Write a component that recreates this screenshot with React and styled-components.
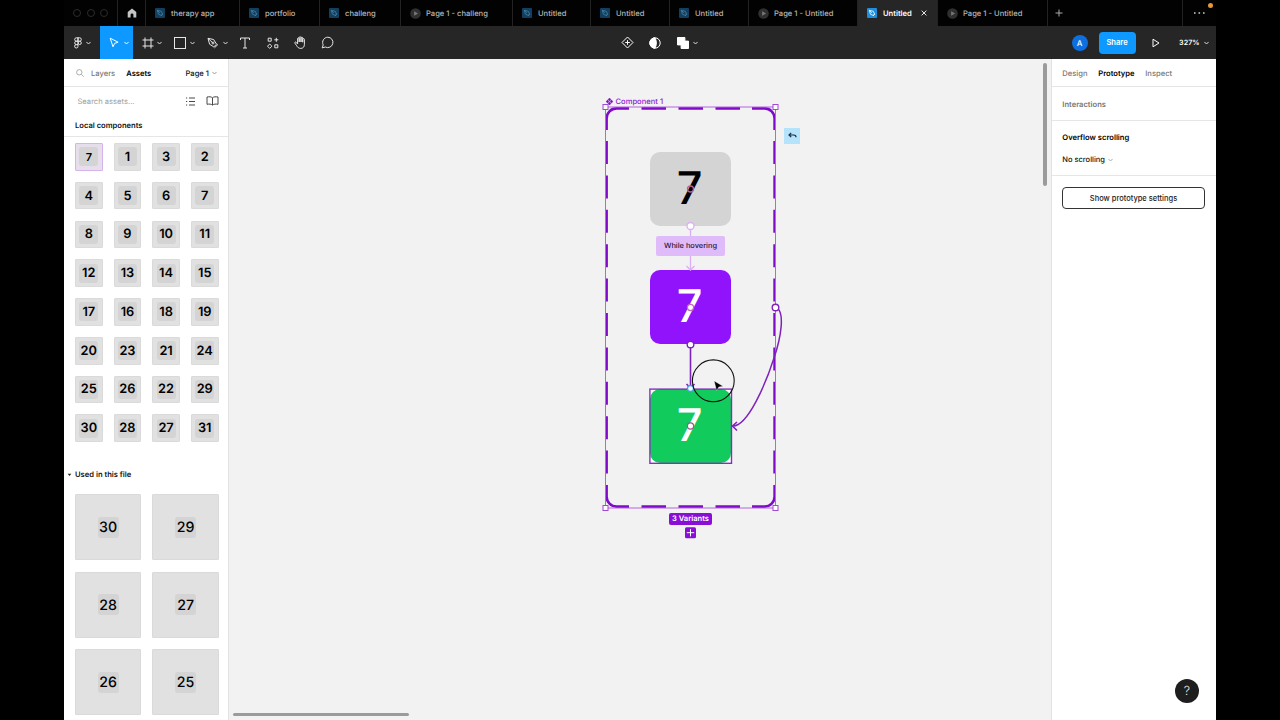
import React from "react";
import styled, { createGlobalStyle, css } from "styled-components";

const GlobalStyle = createGlobalStyle`
  * {
    box-sizing: border-box;
  }

  body {
    margin: 0;
    background: #000;
    font-family: Inter, "Liberation Sans", sans-serif;
    font-size: 7.6px;
    color: #111;
    overflow: hidden;
    text-rendering: geometricPrecision;
  }
`;

const AppWindow = styled.div`
  display: flex;
  flex-direction: column;
  width: 1152px;
  height: 720px;
  margin: 0 64px;
  background: #fff;
`;

// Tab bar
const TabBar = styled.div`
  display: flex;
  flex: none;
  height: 26px;
  background: #020202;
`;

const Tab = styled.div`
  display: flex;
  flex: none;
  align-items: center;
  width: ${(props) => props.$width}px;
  padding-left: 9px;
  border-right: 1px solid #222;
  color: ${(props) => (props.$active ? "#fff" : "#b8b8b8")};
  background: ${(props) => (props.$active ? "#262626" : "transparent")};
  font-weight: ${(props) => (props.$active ? 600 : 500)};
  font-size: 7.6px;
  white-space: nowrap;

  svg {
    flex: none;
    margin-right: ${(props) => (props.$play ? 5 : 6)}px;
  }
`;

const TabClose = styled.span`
  display: flex;
  margin-left: 9px;

  svg {
    margin: 0;
  }
`;

const WindowControls = styled.div`
  display: flex;
  flex: none;
  align-items: center;
  gap: 5.7px;
  width: 54px;
  padding-left: 9px;
  border-right: 1px solid #222;
`;

const WindowDot = styled.span`
  width: 8px;
  height: 8px;
  border: 1px solid #2e2a29;
  border-radius: 50%;
`;

const HomeTab = styled.div`
  display: flex;
  flex: none;
  align-items: center;
  justify-content: center;
  width: 28px;
  border-right: 1px solid #222;
`;

const AddTab = styled.div`
  display: flex;
  flex: 1;
  align-items: center;
  padding-left: 7px;
`;

const TabMenu = styled.div`
  position: relative;
  display: flex;
  align-items: center;
  justify-content: center;
  width: 34px;
  border-left: 1px solid #222;
`;

const NotificationDot = styled.span`
  position: absolute;
  top: 3px;
  right: 3px;
  width: 5px;
  height: 5px;
  border-radius: 50%;
  background: #e8973a;
`;

// Toolbar
const Toolbar = styled.div`
  display: grid;
  grid-template-columns: 550px auto 1fr;
  flex: none;
  height: 33px;
  background: #262626;
`;

const ToolGroup = styled.div`
  display: flex;
  align-items: center;
  justify-content: ${(props) => props.$align || "flex-start"};
`;

const Tool = styled.div`
  display: flex;
  align-items: center;
  justify-content: center;
  gap: ${(props) => props.$gap || 4}px;
  width: ${(props) => props.$width}px;
  height: 33px;
  padding-left: ${(props) => props.$indent || 0}px;
  background: ${(props) => (props.$active ? "#0d99ff" : "transparent")};
`;

const Avatar = styled.div`
  display: flex;
  align-items: center;
  justify-content: center;
  width: 16px;
  height: 16px;
  margin-right: 11px;
  border-radius: 50%;
  background: #0d6fe0;
  color: #fff;
  font-size: 8px;
  font-weight: 500;
`;

const ShareButton = styled.button`
  width: 37px;
  height: 22px;
  margin-right: 16.5px;
  padding: 0;
  border: none;
  border-radius: 4px;
  background: #0d99ff;
  color: #fff;
  font-family: inherit;
  font-size: 7.6px;
  font-weight: 600;
`;

const ZoomLevel = styled.div`
  display: flex;
  align-items: center;
  gap: 4px;
  margin: 0 7.5px 0 19px;
  color: #fff;
  font-size: 7.2px;
  font-weight: 600;
`;

// Main area
const Main = styled.div`
  display: flex;
  flex: 1;
  min-height: 0;
`;

const LeftPanel = styled.div`
  flex: none;
  width: 165px;
  overflow: hidden;
  border-right: 1px solid #e2e2e2;
  background: #fff;
`;

const LeftHeader = styled.div`
  display: flex;
  align-items: center;
  height: 28px;
  padding: 1px 11px 0 12px;
  border-bottom: 1px solid #e6e6e6;
`;

const PanelTab = styled.span`
  color: ${(props) => (props.$active ? "#000" : "#777")};
  font-size: 7.6px;
  font-weight: ${(props) => (props.$active ? 600 : 500)};
`;

const LayersTab = styled(PanelTab)`
  margin: 0 11px 0 7px;
`;

const PageSelect = styled.div`
  display: flex;
  align-items: center;
  gap: 3px;
  margin-left: auto;
  font-weight: 500;
`;

const SearchRow = styled.div`
  display: flex;
  align-items: center;
  gap: 10.7px;
  height: 28px;
  padding: 0 9.3px 0 13.5px;
  color: #a0a0a0;
`;

const SearchText = styled.span`
  flex: 1;
`;

const SectionTitle = styled.div`
  height: 21.5px;
  padding: 6px 0 0 11px;
  border-bottom: 1px solid #e6e6e6;
  color: #111;
  font-weight: 600;
  line-height: 10px;
`;

const ComponentGrid = styled.div`
  display: grid;
  grid-template-columns: repeat(4, 27.6px);
  grid-auto-rows: 27.6px;
  gap: 11.2px 11.05px;
  padding: 6.5px 0 0 11px;
`;

const Tile = styled.div`
  display: flex;
  align-items: center;
  justify-content: center;
  border: 1px solid ${(props) => (props.$selected ? "#d5b4ee" : "#dadada")};
  border-radius: 1px;
  background: ${(props) => (props.$selected ? "#e6dfeb" : "#e1e1e1")};
`;

const TileNumber = styled.span`
  display: flex;
  align-items: center;
  justify-content: center;
  width: ${(props) => (props.$large ? 21 : 19)}px;
  height: ${(props) => (props.$large ? 21 : 19)}px;
  padding-top: 1px;
  border-radius: 3px;
  background: #d4d4d4;
  color: #000;
  font-size: ${(props) => (props.$large ? 14.2 : props.$small ? 11 : 12.8)}px;
  font-weight: ${(props) => (props.$large ? 500 : 600)};
`;

const UsedHeader = styled.div`
  display: flex;
  align-items: center;
  gap: 3px;
  height: 20px;
  margin-top: 22px;
  padding: 1px 0 0 3px;
  font-weight: 600;
`;

const UsedGrid = styled.div`
  display: grid;
  grid-template-columns: repeat(2, 66.3px);
  grid-auto-rows: 66.3px;
  gap: 11.2px;
  padding: 10px 0 0 11px;
`;

// Canvas: the nodes sit freely on it, so they are placed by coordinates
const Canvas = styled.div`
  position: relative;
  flex: 1;
  overflow: hidden;
  background: #f2f2f2;
`;

const CanvasDrawing = styled.svg`
  position: absolute;
  top: 0;
  left: 0;
`;

const VariantNode = styled.div`
  position: absolute;
  top: ${(props) => props.$top}px;
  left: 421.2px;
  display: flex;
  align-items: center;
  justify-content: center;
  width: 80.8px;
  height: 74px;
  padding: 0 2px 3.5px 0;
  border-radius: 10px;
  background: ${(props) => props.$bg};
  color: ${(props) => props.$color};
  font-size: 45px;
  font-weight: 500;
  line-height: 1;
`;

const SelectionBackdrop = styled.div`
  position: absolute;
  top: 330px;
  left: 421px;
  width: 81px;
  height: 74px;
  background: #fff;
`;

const ComponentLabel = styled.div`
  position: absolute;
  top: 37px;
  left: 377px;
  display: flex;
  align-items: center;
  gap: 2.5px;
  color: #8f1bd4;
  font-weight: 500;
  line-height: 11px;
`;

const HoverLabel = styled.div`
  position: absolute;
  top: 177px;
  left: 427px;
  width: 69px;
  height: 20px;
  border-radius: 2px;
  background: #dfbcf9;
  color: #2a1238;
  font-size: 7.4px;
  font-weight: 500;
  line-height: 20px;
  text-align: center;
`;

const VariantCount = styled.div`
  position: absolute;
  top: 454px;
  left: 440px;
  width: 43px;
  height: 12px;
  border-radius: 2px;
  background: #8a0fd6;
  color: #fff;
  font-weight: 600;
  line-height: 12px;
  text-align: center;
`;

const BackBadge = styled.div`
  position: absolute;
  top: 68.5px;
  left: 555px;
  display: flex;
  align-items: center;
  justify-content: center;
  width: 16px;
  height: 16px;
  background: #b4e3fb;
`;

const Scrollbar = styled.div`
  position: absolute;
  border-radius: 3px;
  background: #9b9b9b;
  ${(props) =>
    props.$vertical
      ? css`
          top: 4px;
          right: 4px;
          width: 4px;
          height: 123px;
        `
      : css`
          bottom: 4px;
          left: 4px;
          width: 176px;
          height: 3px;
        `}
`;

// Right panel
const RightPanel = styled.div`
  position: relative;
  flex: none;
  width: 165px;
  border-left: 1px solid #e2e2e2;
  background: #fff;
`;

const RightTabs = styled.div`
  display: flex;
  align-items: center;
  gap: 10.8px;
  height: 28px;
  padding: 1px 0 0 10.3px;
  border-bottom: 1px solid #e6e6e6;
`;

const InteractionsRow = styled.div`
  display: flex;
  align-items: center;
  height: 34px;
  padding: 1px 0 0 10.3px;
  border-bottom: 1px solid #e6e6e6;
  color: #777;
  font-weight: 600;
`;

const OverflowSection = styled.div`
  height: 55px;
  padding: 12px 0 0 10.3px;
  border-bottom: 1px solid #e6e6e6;
`;

const OverflowTitle = styled.div`
  margin-bottom: 12px;
  color: #000;
  font-weight: 600;
  line-height: 10px;
`;

const OverflowSelect = styled.div`
  display: flex;
  align-items: center;
  gap: 3px;
  font-size: 7.5px;
  font-weight: 500;
  line-height: 10px;
`;

const SettingsButton = styled.button`
  display: block;
  width: 143px;
  height: 22px;
  margin: 11px 0 0 10px;
  padding: 0;
  border: 1px solid #333;
  border-radius: 4px;
  background: #fff;
  color: #222;
  font-family: inherit;
  font-size: 7.5px;
  font-weight: 500;
`;

const HelpButton = styled.div`
  position: absolute;
  right: 17px;
  bottom: 17px;
  display: flex;
  align-items: center;
  justify-content: center;
  width: 24px;
  height: 24px;
  border-radius: 50%;
  background: #1e1e1e;
  color: #e4e4e4;
  font-size: 12.5px;
  font-weight: 300;
`;

const TABS = [
  { label: "therapy app", width: 94 },
  { label: "portfolio", width: 80 },
  { label: "challeng", width: 81 },
  { label: "Page 1 - challeng", width: 112, play: true },
  { label: "Untitled", width: 78 },
  { label: "Untitled", width: 79 },
  { label: "Untitled", width: 79 },
  { label: "Page 1 - Untitled", width: 109, play: true },
  { label: "Untitled", width: 80, active: true },
  { label: "Page 1 - Untitled", width: 110, play: true },
];

const LOCAL_COMPONENTS = [
  7, 1, 3, 2, 4, 5, 6, 7, 8, 9, 10, 11, 12, 13, 14, 15, 17, 16, 18, 19, 20, 23,
  21, 24, 25, 26, 22, 29, 30, 28, 27, 31,
];

const USED_COMPONENTS = [30, 29, 28, 27, 26, 25];

function Icon({ width = 12, height = 12, color = "#e6e6e6", stroke = 1, children }) {
  return (
    <svg
      width={width}
      height={height}
      viewBox={`0 0 ${width} ${height}`}
      fill="none"
      stroke={color}
      strokeWidth={stroke}
    >
      {children}
    </svg>
  );
}

function Chevron({ color = "#dedede" }) {
  return (
    <Icon width={5} height={4} color={color}>
      <path d="M.4 .9l2.1 2.1L4.6 .9" />
    </Icon>
  );
}

function FileIcon({ active }) {
  return (
    <Icon width={10} height={10} color={active ? "#fff" : "#4580a2"} stroke={0.8}>
      <rect width="10" height="10" rx="1" fill={active ? "#1e8fdd" : "#123f5f"} stroke="none" />
      <path d="M2.3 2.3l4 1 1.2 2.7-1.4 1.4-2.7-1.2zM2.3 2.3l2.5 2.5M6 8l2-2" />
    </Icon>
  );
}

function PlayIcon() {
  return (
    <Icon width={11} height={11}>
      <circle cx="5.5" cy="5.5" r="5.3" fill="#303030" stroke="none" />
      <path d="M4.1 3.2l4 2.3-4 2.3z" fill="#777" stroke="none" />
    </Icon>
  );
}

function Tabs() {
  return (
    <TabBar>
      <WindowControls>
        <WindowDot />
        <WindowDot />
        <WindowDot />
      </WindowControls>
      <HomeTab>
        <Icon width={10} height={10}>
          <path d="M5 .4L.7 4v5.4h2.9V6.8a1.4 1.4 0 012.8 0v2.6h2.9V4z" fill="#c4c4c4" stroke="none" />
        </Icon>
      </HomeTab>
      {TABS.map((tab, i) => (
        <Tab key={i} $width={tab.width} $active={tab.active} $play={tab.play}>
          {tab.play ? <PlayIcon /> : <FileIcon active={tab.active} />}
          {tab.label}
          {tab.active && (
            <TabClose>
              <Icon width={6} height={6}>
                <path d="M.6.6l4.8 4.8M5.4.6L.6 5.4" />
              </Icon>
            </TabClose>
          )}
        </Tab>
      ))}
      <AddTab>
        <Icon width={8} height={8} color="#aaa">
          <path d="M4 .5v7M.5 4h7" />
        </Icon>
      </AddTab>
      <TabMenu>
        <Icon width={11} height={2}>
          <path d="M0 1h1.6M4.5 1h1.6M9 1h1.6" stroke="#ccc" strokeWidth="1.4" />
        </Icon>
        <NotificationDot />
      </TabMenu>
    </TabBar>
  );
}

function ToolbarRow() {
  return (
    <Toolbar>
      <ToolGroup>
        <Tool $width={36} $gap={4}>
          <Icon width={8} height={12}>
            <path d="M4 .8H2.4a1.7 1.7 0 000 3.4H4zM4 .8h1.6a1.7 1.7 0 010 3.4H4zM4 4.2H2.4a1.7 1.7 0 000 3.4H4zM4 7.6H2.4A1.7 1.7 0 104 9.3z" />
            <circle cx="5.7" cy="5.9" r="1.6" />
          </Icon>
          <Chevron />
        </Tool>
        <Tool $width={33} $active $gap={5} $indent={4}>
          <Icon width={10} height={11} color="#fff">
            <path d="M1.2 1.2l7.9 4-3.5 1.2-1.6 3.4z" />
          </Icon>
          <Chevron color="#fff" />
        </Tool>
        <Tool $width={33} $gap={2.5} $indent={4.5}>
          <Icon>
            <path d="M3 .5v11M9 .5v11M.5 3h11M.5 9h11" />
          </Icon>
          <Chevron />
        </Tool>
        <Tool $width={33} $gap={4} $indent={4.5}>
          <Icon>
            <rect x=".5" y=".5" width="11" height="11" />
          </Icon>
          <Chevron />
        </Tool>
        <Tool $width={32} $gap={3.5} $indent={5}>
          <Icon>
            <path d="M1 1.3l5.6 1.2 3 4.7-2.8 2.7-4.2-2.7zM1 1.3l4.5 4.3M7.5 10.8l3.5-3.4" />
            <circle cx="6" cy="6" r="1" />
          </Icon>
          <Chevron />
        </Tool>
        <Tool $width={27}>
          <Icon>
            <path d="M1.5 3V1h9v2M6 1v10M4 11h4" />
          </Icon>
        </Tool>
        <Tool $width={29}>
          <Icon>
            <path d="M1.2 1.2h3v3h-3zM7.8 7.8h3v3h-3zM2.7 7l2.2 2.2-2.2 2.2L.5 9.2zM9.3.8v4M7.3 2.8h4" />
          </Icon>
        </Tool>
        <Tool $width={27}>
          <Icon width={13} height={13}>
            <path d="M3.6 8V2.7c0-1.2 1.6-1.2 1.6 0V6 1.6c0-1.2 1.8-1.2 1.8 0V6 2c0-1.1 1.7-1.1 1.7 0v4.2V3.4c0-1.1 1.7-1.1 1.7 0v5c0 2.5-1.4 4-3.6 4-2.3 0-3.3-1.2-4.1-2.7L.9 7.2c-.5-1 .7-1.7 1.5-.7z" />
          </Icon>
        </Tool>
        <Tool $width={26}>
          <Icon width={13} height={13}>
            <path d="M6.8 1.2a5.2 5.2 0 11-2.5 9.8L1.2 11.9l1-3A5.3 5.3 0 016.8 1.2z" />
          </Icon>
        </Tool>
      </ToolGroup>
      <ToolGroup>
        <Tool $width={27}>
          <Icon width={13} height={13} color="#fff">
            <path d="M6.5 1l5.5 5.5L6.5 12 1 6.5zM6.5 4.2v4.6M4.2 6.5h4.6" />
          </Icon>
        </Tool>
        <Tool $width={27}>
          <Icon color="#fff">
            <circle cx="6" cy="6" r="5.2" />
            <path d="M6 .8a5.2 5.2 0 000 10.4c1.8-2.8 1.8-7.6 0-10.4z" fill="#fff" />
          </Icon>
        </Tool>
        <Tool $width={38}>
          <Icon color="#fff">
            <path d="M.5.5h7.4v3.6h3.6v7.4H4.1V7.9H.5z" fill="#fff" />
          </Icon>
          <Chevron />
        </Tool>
      </ToolGroup>
      <ToolGroup $align="flex-end">
        <Avatar>A</Avatar>
        <ShareButton>Share</ShareButton>
        <Icon width={8} height={10} color="#fff">
          <path d="M1 1.2l6 3.8-6 3.8z" />
        </Icon>
        <ZoomLevel>
          327%
          <Chevron />
        </ZoomLevel>
      </ToolGroup>
    </Toolbar>
  );
}

function AssetsPanel() {
  return (
    <LeftPanel>
      <LeftHeader>
        <Icon width={8} height={8} color="#999" stroke={0.8}>
          <circle cx="3.3" cy="3.3" r="2.7" />
          <path d="M5.3 5.3l2.4 2.4" />
        </Icon>
        <LayersTab>Layers</LayersTab>
        <PanelTab $active>Assets</PanelTab>
        <PageSelect>
          Page 1
          <Chevron color="#999" />
        </PageSelect>
      </LeftHeader>
      <SearchRow>
        <SearchText>Search assets...</SearchText>
        <Icon width={9} height={9} color="#333" stroke={0.9}>
          <path d="M0 1h1.2M3 1h6M0 4.5h1.2M3 4.5h6M0 8h1.2M3 8h6" />
        </Icon>
        <Icon width={13} height={10} color="#333" stroke={0.9}>
          <path d="M6.5 1.8C5.5.7 3 .6 1 1v7.3c2-.4 4.5-.3 5.5.8 1-1.1 3.5-1.2 5.5-.8V1c-2-.4-4.5-.3-5.5.8zV9" />
        </Icon>
      </SearchRow>
      <SectionTitle>Local components</SectionTitle>
      <ComponentGrid>
        {LOCAL_COMPONENTS.map((number, i) => (
          <Tile key={i} $selected={i === 0}>
            <TileNumber $small={i === 0}>{number}</TileNumber>
          </Tile>
        ))}
      </ComponentGrid>
      <UsedHeader>
        <Icon width={5} height={4}>
          <path d="M.7.8h3.6L2.5 3.1z" fill="#222" stroke="none" />
        </Icon>
        Used in this file
      </UsedHeader>
      <UsedGrid>
        {USED_COMPONENTS.map((number) => (
          <Tile key={number}>
            <TileNumber $large>{number}</TileNumber>
          </Tile>
        ))}
      </UsedGrid>
    </LeftPanel>
  );
}

// Dashed outline of the component set with its selection handles
function ComponentSetOutline() {
  return (
    <g fill="none">
      <g stroke="#7f0bc8" strokeWidth="2.6">
        <path d="M400 49.4H387.6a10 10 0 00-10 10V71M523 49.4h12.6a10 10 0 0110 10V71M400 447.6H387.6a10 10 0 01-10-10V426M523 447.6h12.6a10 10 0 0010-10V426" />
        <path d="M412.5 49.4H511M412.5 447.6H511" strokeDasharray="24.5 12.5" />
        <path d="M377.6 82V416M545.6 82V416" strokeDasharray="23 11.4" />
      </g>
      <rect x="376.5" y="48" width="170" height="401" stroke="#b565dd" />
      {[
        [376.5, 48],
        [546.5, 48],
        [376.5, 449],
        [546.5, 449],
      ].map(([x, y]) => (
        <rect key={`${x}-${y}`} x={x - 2.5} y={y - 2.5} width="5" height="5" fill="#fff" stroke="#a347d6" />
      ))}
    </g>
  );
}

function Connectors() {
  return (
    <g fill="none">
      <g stroke="#d9b0f5" strokeWidth="1.3">
        <path d="M461.5 167V211M457.5 207l4 4 4-4" />
        <circle cx="461.5" cy="167" r="3.5" fill="#fff" />
      </g>
      <g stroke="#7f22bd" strokeWidth="1.6">
        <path d="M461.5 286V329M457.5 325l4 4 4-4" />
        <path d="M548 249C555.5 254 552.5 277 545 299C537 324 519 367 504 367" strokeWidth="1.5" />
        <path d="M508 363l-4.5 4 4.5 4.5" />
        <circle cx="461.5" cy="285.5" r="3.3" fill="#fff" strokeWidth="1.4" />
        <circle cx="546.5" cy="248.5" r="3.3" fill="#fff" strokeWidth="1.4" />
      </g>
      <circle cx="461.5" cy="329.5" r="3" fill="#fff" stroke="#3aa5f0" strokeWidth="1.3" />
      <circle cx="461.5" cy="130" r="3" stroke="#bf5ba0" strokeWidth="1.3" />
      <circle cx="461.5" cy="248.5" r="3.1" fill="#fff" stroke="#c765b8" strokeWidth="1.2" />
      <circle cx="461.5" cy="367" r="3.1" fill="#fff" stroke="#9a5a8a" strokeWidth="1.2" />
    </g>
  );
}

function DesignCanvas() {
  return (
    <Canvas>
      <SelectionBackdrop />
      <VariantNode $top={93} $bg="#d4d4d4" $color="#000">7</VariantNode>
      <VariantNode $top={211.4} $bg="#9013fb" $color="#fff">7</VariantNode>
      <VariantNode $top={330.3} $bg="#11cb5c" $color="#fff">7</VariantNode>
      <CanvasDrawing width="822" height="661">
        <ComponentSetOutline />
        <rect x="420.9" y="330.1" width="81.6" height="74.2" fill="none" stroke="#8530bd" strokeWidth="1.4" />
        <Connectors />
        <rect x="456" y="468.2" width="11" height="11" rx="1.5" fill="#8a0fd6" />
        <path d="M461.5 470v7.4M457.8 473.7h7.4" stroke="#fff" />
        <circle cx="484.3" cy="321.8" r="20.9" fill="none" stroke="#111" strokeWidth="1.1" />
        <path d="M485.2 322l8.8 5.2-4.2.8-2.2 3.7z" fill="#000" stroke="#eee" strokeWidth=".4" />
      </CanvasDrawing>
      <ComponentLabel>
        <Icon width={7} height={7}>
          <path
            d="M3.5 0l1.5 1.5L3.5 3 2 1.5zM3.5 4L5 5.5 3.5 7 2 5.5zM1.5 2L3 3.5 1.5 5 0 3.5zM5.5 2L7 3.5 5.5 5 4 3.5z"
            fill="#7f0bc8"
            stroke="#7f0bc8"
            strokeWidth=".4"
          />
        </Icon>
        Component 1
      </ComponentLabel>
      <HoverLabel>While hovering</HoverLabel>
      <VariantCount>3 Variants</VariantCount>
      <BackBadge>
        <Icon width={9} height={7} color="#17303e" stroke={1.2}>
          <path d="M3.2 .8L1 3l2.2 2.2M1 3h4.8C7.2 3 8 3.6 8 5.2" />
        </Icon>
      </BackBadge>
      <Scrollbar $vertical />
      <Scrollbar />
    </Canvas>
  );
}

function PrototypePanel() {
  return (
    <RightPanel>
      <RightTabs>
        <PanelTab>Design</PanelTab>
        <PanelTab $active>Prototype</PanelTab>
        <PanelTab>Inspect</PanelTab>
      </RightTabs>
      <InteractionsRow>Interactions</InteractionsRow>
      <OverflowSection>
        <OverflowTitle>Overflow scrolling</OverflowTitle>
        <OverflowSelect>
          No scrolling
          <Chevron color="#aaa" />
        </OverflowSelect>
      </OverflowSection>
      <SettingsButton>Show prototype settings</SettingsButton>
      <HelpButton>?</HelpButton>
    </RightPanel>
  );
}

function App() {
  return (
    <>
      <GlobalStyle />
      <AppWindow>
        <Tabs />
        <ToolbarRow />
        <Main>
          <AssetsPanel />
          <DesignCanvas />
          <PrototypePanel />
        </Main>
      </AppWindow>
    </>
  );
}

export default App;
